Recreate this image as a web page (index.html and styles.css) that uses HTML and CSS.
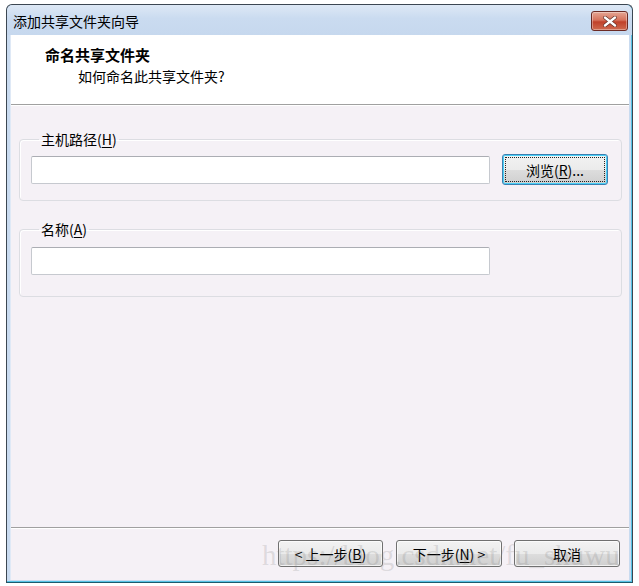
FILE: index.html
```html
<!DOCTYPE html>
<html lang="zh-CN">
<head>
  <meta charset="UTF-8">
  <title>添加共享文件夹向导</title>
  <link rel="stylesheet" href="styles.css">
</head>
<body>
  <div class="window">
    <!-- 标题栏 -->
    <div class="titlebar">
      <span class="title">添加共享文件夹向导</span>
      <button class="close" title="关闭">
        <svg width="14" height="11" viewBox="0 0 14 11">
          <path d="M2 1.5 L12 9.5 M12 1.5 L2 9.5" stroke="#5a2a22" stroke-width="3.6" stroke-linecap="round"/>
          <path d="M2 1.5 L12 9.5 M12 1.5 L2 9.5" stroke="#fff" stroke-width="2.4" stroke-linecap="round"/>
        </svg>
      </button>
    </div>

    <div class="client">
      <!-- 向导头部 -->
      <div class="wizard-head">
        <div class="head-title">命名共享文件夹</div>
        <div class="head-sub">如何命名此共享文件夹?</div>
      </div>

      <!-- 内容 -->
      <div class="wizard-body">
        <fieldset class="group">
          <legend>主机路径(<u>H</u>)</legend>
          <div class="row">
            <input type="text" class="field">
            <button class="btn focused"><span class="focus-ring">浏览(<u>R</u>)...</span></button>
          </div>
        </fieldset>

        <fieldset class="group group-name">
          <legend>名称(<u>A</u>)</legend>
          <div class="row">
            <input type="text" class="field">
          </div>
        </fieldset>
      </div>

      <!-- 底部按钮 -->
      <div class="wizard-foot">
        <button class="btn">&lt; 上一步(<u>B</u>)</button>
        <button class="btn">下一步(<u>N</u>) &gt;</button>
        <button class="btn">取消</button>
        <div class="watermark">https://blog.csdn.net/fu_shuwu</div>
      </div>
    </div>
  </div>
</body>
</html>
```

FILE: styles.css
```css
/* 基本 */
body {
  margin: 0;
  background: #fff;
  font-family: "Noto Sans CJK SC", "Liberation Sans", sans-serif;
  font-size: 15px;
  color: #000;
}
u { text-decoration: underline; text-underline-offset: 2px; }

/* === 窗口 === */
.window {
  margin: 4px 0 0 6px;
  width: 619px;
  height: 575px;
  border: 1px solid #3c4752;
  border-bottom-color: #1d5a6e;
  border-radius: 6px 6px 0 0;
  background: #c9dbf0;
  padding: 0 3px 2px;
  box-sizing: content-box;
  display: flex;
  flex-direction: column;
  box-shadow: inset 0 -1px 0 #56c3e6, inset -1px 0 0 #56c3e6;
}
.titlebar {
  height: 30px;
  display: flex;
  align-items: flex-start;
  justify-content: space-between;
  background: linear-gradient(#dde8f5, #cadbf0 45%, #c6d8ee);
  margin: 0 -3px;
  padding: 0 4px 0 6px;
  border-radius: 6px 6px 0 0;
}
.title {
  font-size: 14px;
  line-height: 18px;
  margin-top: 7px;
}
.close {
  flex-shrink: 0;
  width: 37px;
  height: 20px;
  margin-top: 6px;
  border: 1px solid #6b2a24;
  border-radius: 3px;
  background: linear-gradient(#e5a694, #d6725c 45%, #c0412a 55%, #cf6a4f);
  display: flex;
  align-items: center;
  justify-content: center;
  padding: 0;
  box-shadow: inset 0 0 0 1px rgba(255,255,255,0.35);
}

.client {
  flex: 1;
  background: #f5f1f6;
  display: flex;
  flex-direction: column;
  border-left: 1px solid #dfe9f6;
}

/* === 头部 === */
.wizard-head {
  height: 70px;
  background: #fff;
  border-bottom: 1px solid #a0a0a0;
  box-sizing: border-box;
  padding: 10px 0 0 34px;
}
.head-title {
  font-weight: bold;
  font-size: 15px;
  line-height: 20px;
}
.head-sub {
  font-size: 14px;
  line-height: 20px;
  padding-left: 33px;
  margin-top: 1px;
}

/* === 内容 === */
.wizard-body {
  flex: 1;
  border-top: 1px solid #fff;
  padding: 24px 7px 0 8px;
}
.group {
  margin: 0;
  border: 1px solid #dcdde2;
  border-radius: 4px;
  padding: 6px 13px 15px 11px;
  box-shadow: inset 1px 1px 0 #fff;
}
.group legend {
  padding: 0 2px;
  margin-left: 8px;
  line-height: 18px;
  font-size: 14px;
}
.group-name {
  margin-top: 19px;
  padding-top: 9px;
  padding-bottom: 21px;
}
.row {
  display: flex;
  align-items: center;
  gap: 12px;
}
.field {
  width: 459px;
  height: 28px;
  box-sizing: border-box;
  border: 1px solid #c6c9cf;
  border-top-color: #abadb3;
  border-radius: 2px;
  background: #fff;
  margin: 0;
}

/* === 按钮 === */
.btn {
  width: 106px;
  height: 27px;
  padding: 0;
  border: 1px solid #707070;
  border-radius: 3px;
  background: linear-gradient(#f2f2f2, #ebebeb 50%, #dddddd 51%, #cfcfcf);
  font-family: inherit;
  font-size: 14px;
  color: #000;
  box-shadow: inset 0 0 0 1px rgba(255,255,255,0.7);
}
.btn.focused {
  height: 31px;
  border-color: #3c7fb1;
  box-shadow: inset 0 0 0 1px #48d0f7;
  padding: 2px;
}
.focus-ring {
  display: flex;
  align-items: center;
  justify-content: center;
  height: 100%;
  border: 1px dotted #222;
  box-sizing: border-box;
}

/* === 底部 === */
.wizard-foot {
  position: relative;
  height: 53px;
  border-top: 1px solid #a0a0a0;
  box-shadow: inset 0 1px 0 #fff;
  box-sizing: border-box;
  display: flex;
  justify-content: flex-end;
  align-items: flex-start;
  gap: 12px;
  padding: 12px 9px 0 0;
}
.wizard-foot .btn:first-child { width: 105px; margin-right: 1px; }
.watermark {
  position: absolute;
  left: 251px;
  top: 11px;
  font-family: "Liberation Serif", serif;
  font-size: 29px;
  line-height: 32px;
  color: rgba(120, 120, 120, 0.2);
  white-space: nowrap;
  pointer-events: none;
}
```
